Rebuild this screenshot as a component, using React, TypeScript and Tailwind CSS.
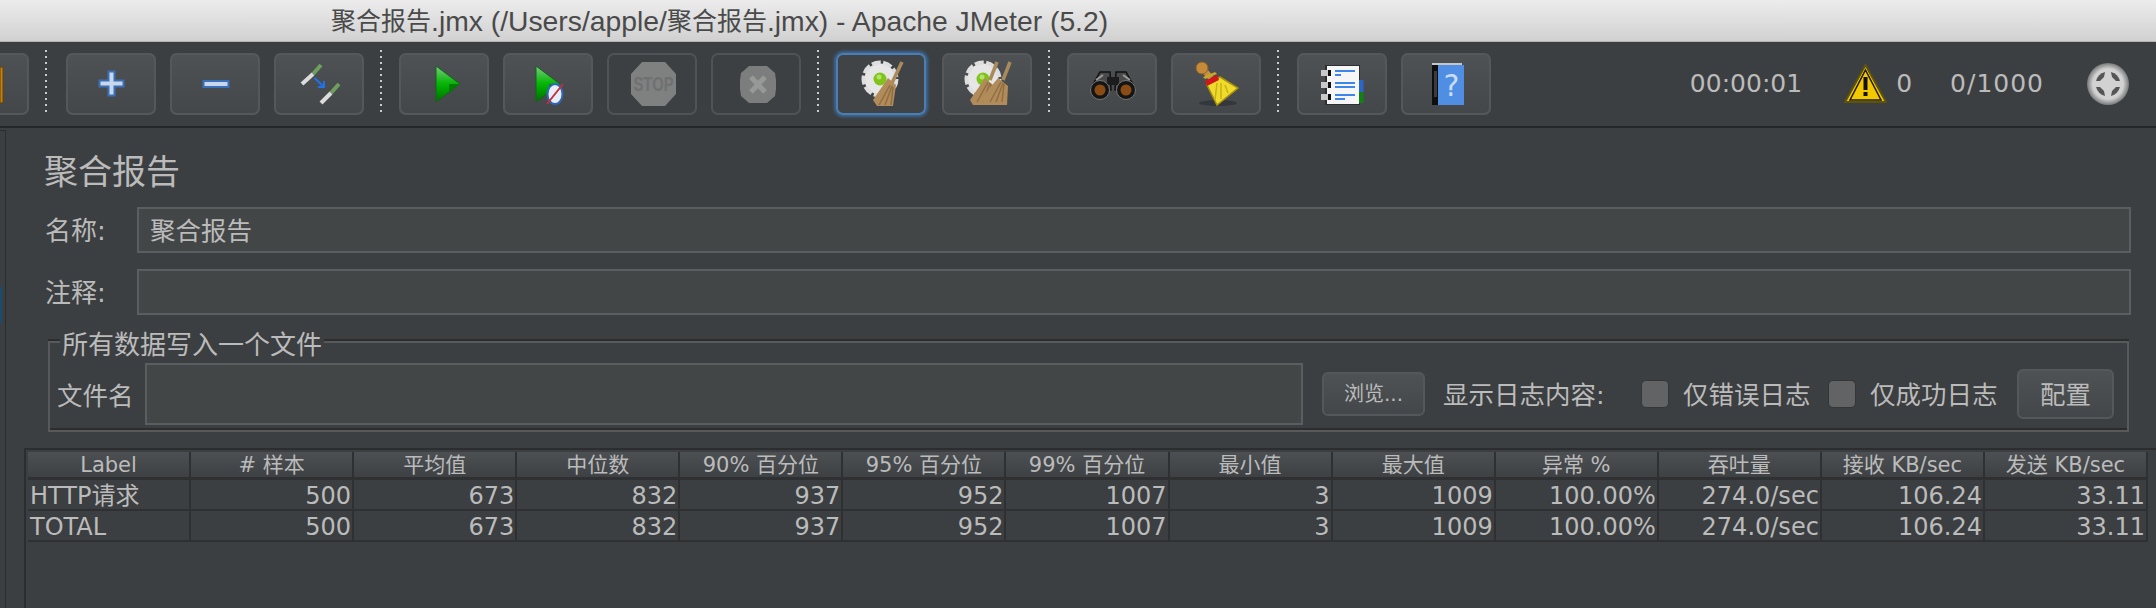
const CJK = "font-['DejaVu_Sans','Noto_Sans_CJK_SC',sans-serif]";

const columns = [
  "Label",
  "# 样本",
  "平均值",
  "中位数",
  "90% 百分位",
  "95% 百分位",
  "99% 百分位",
  "最小值",
  "最大值",
  "异常 %",
  "吞吐量",
  "接收 KB/sec",
  "发送 KB/sec",
];

const rows = [
  ["HTTP请求", "500", "673", "832", "937", "952", "1007", "3", "1009", "100.00%", "274.0/sec", "106.24", "33.11"],
  ["TOTAL", "500", "673", "832", "937", "952", "1007", "3", "1009", "100.00%", "274.0/sec", "106.24", "33.11"],
];

function Sep() {
  return (
    <div className="mx-[16px] h-[62px] w-[2px] shrink-0 -translate-y-[3px] bg-[repeating-linear-gradient(to_bottom,#c9cbcc_0,#c9cbcc_2px,transparent_2px,transparent_6px)]" />
  );
}

function ToolButton({
  children,
  disabled,
  focused,
}: {
  children?: React.ReactNode;
  disabled?: boolean;
  focused?: boolean;
}) {
  let look = "bg-gradient-to-b from-[#4e5254] to-[#434749] shadow-[inset_0_0_0_2px_#54585a]";
  if (disabled) look = "bg-[#3d4042] shadow-[inset_0_0_0_2px_#505355]";
  if (focused) look = "bg-[#404446] shadow-[inset_0_0_0_2px_#4a7eb5,0_0_3px_2px_#3d6794]";
  return <div className={`h-[62px] w-[90px] shrink-0 rounded-[7px] ${look}`}>{children}</div>;
}

function Icon({ children }: { children: React.ReactNode }) {
  return (
    <svg width="90" height="62" viewBox="0 0 90 62" className="block">
      {children}
    </svg>
  );
}

function Gear({ cx, cy }: { cx: number; cy: number }) {
  return (
    <g>
      <circle cx={cx} cy={cy} r="15.5" fill="#e6e6e6" />
      <circle cx={cx} cy={cy} r="16.5" fill="none" stroke="#dedede" strokeWidth="4" strokeDasharray="9 2.5" />
      <circle cx={cx} cy={cy} r="6.5" fill="#7fc31c" />
      <circle cx={cx - 1} cy={cy - 2} r="2.5" fill="#b5e26a" />
    </g>
  );
}

function Broom({ points, handle }: { points: string; handle: number[] }) {
  const [x1, y1, x2, y2] = handle;
  return (
    <g>
      <line x1={x1} y1={y1} x2={x2} y2={y2} stroke="#a98a5c" strokeWidth="3.5" />
      <polygon points={points} fill="#b18c5a" />
      <path
        d={`M${x2 - 2} ${y2 + 2}L${x2 - 13} ${y2 + 22}M${x2} ${y2 + 3}L${x2 - 7} ${y2 + 22}M${x2 + 1} ${y2 + 4}L${x2 - 1} ${y2 + 22}`}
        stroke="#8f6e42"
        strokeWidth="1.5"
        fill="none"
      />
    </g>
  );
}

function PlayShape({ x, id }: { x: number; id: string }) {
  return (
    <g>
      <defs>
        <linearGradient id={id} x1="0" y1="0" x2="0" y2="1">
          <stop offset="0" stopColor="#7fcb84" />
          <stop offset="0.45" stopColor="#0cb80c" />
          <stop offset="0.6" stopColor="#00a800" />
          <stop offset="1" stopColor="#006d00" />
        </linearGradient>
      </defs>
      <polygon points={`${x},13 ${x + 24},31 ${x},49`} fill={`url(#${id})`} stroke="#11651a" strokeWidth="1" />
      <polygon points={`${x + 13},31 ${x + 23},31 ${x + 13},40`} fill="#007a00" />
    </g>
  );
}

function Toolbar() {
  return (
    <div className="flex h-[84px] items-center bg-[#3c3f41]">
      <div className="ml-[-61px] flex h-[62px] items-center">
        <ToolButton>
          <Icon>
            <rect x="61" y="14" width="3" height="36" fill="#c57f10" stroke="#5f4212" strokeWidth="1" />
          </Icon>
        </ToolButton>
      </div>
      <Sep />
      <div className="ml-[3px] flex gap-[14px]">
        <ToolButton>
          <Icon>
            <path
              d="M42.5 18.5h6v9h9v6h-9v9h-6v-9h-9v-6h9z"
              fill="#c6d7ee"
              stroke="#3c70b6"
              strokeWidth="2"
            />
          </Icon>
        </ToolButton>
        <ToolButton>
          <Icon>
            <rect x="33.5" y="28" width="25" height="6" fill="#c6d7ee" stroke="#3c70b6" strokeWidth="2" />
          </Icon>
        </ToolButton>
        <ToolButton>
          <Icon>
            <line x1="47" y1="12" x2="39" y2="21" stroke="#6f9f5e" strokeWidth="4" />
            <line x1="39" y1="21" x2="28" y2="31" stroke="#dcdcdc" strokeWidth="4" />
            <line x1="65" y1="31" x2="57" y2="40" stroke="#6f9f5e" strokeWidth="4" />
            <line x1="57" y1="40" x2="47" y2="50" stroke="#dcdcdc" strokeWidth="4" />
            <path d="M40.5 25L50 34M50 28v6h-6" fill="none" stroke="#1f73e8" strokeWidth="2" />
          </Icon>
        </ToolButton>
      </div>
      <Sep />
      <div className="ml-[1px] flex gap-[14px]">
        <ToolButton>
          <Icon>
            <PlayShape x={37} id="playA" />
          </Icon>
        </ToolButton>
        <ToolButton>
          <Icon>
            <PlayShape x={33} id="playB" />
            <ellipse cx="52" cy="41" rx="7.5" ry="10" fill="#e8eef8" stroke="#2f66b8" strokeWidth="2" />
            <line x1="44" y1="51" x2="60" y2="31" stroke="#c2303c" strokeWidth="2" />
          </Icon>
        </ToolButton>
        <ToolButton disabled>
          <Icon>
            <polygon points="35,9 58,9 69,21 69,41 58,53 35,53 24,41 24,21" fill="#7f8080" />
            <text
              x="46.5"
              y="38"
              textAnchor="middle"
              fontFamily="Liberation Sans, sans-serif"
              fontWeight="700"
              fontSize="20"
              textLength="40"
              lengthAdjust="spacingAndGlyphs"
              fill="#6f7070"
            >
              STOP
            </text>
          </Icon>
        </ToolButton>
        <ToolButton disabled>
          <Icon>
            <polygon points="38,13 56,13 64,20 65,27 65,36 64,43 56,50 38,50 30,43 29,36 29,27 30,20" fill="#7c7d7d" />
            <path d="M40 24L54 39M54 24L40 39" stroke="#979898" strokeWidth="5" />
          </Icon>
        </ToolButton>
      </div>
      <Sep />
      <div className="ml-[1px] flex gap-[16px]">
        <ToolButton focused>
          <Icon>
            <Gear cx={44} cy={26} />
            <Broom points="37,47 52,25 60,32 57,53 41,53" handle={[66, 9, 56, 30]} />
          </Icon>
        </ToolButton>
        <ToolButton>
          <Icon>
            <Gear cx={41} cy={26} />
            <Broom points="28,47 43,25 51,32 48,52 31,52" handle={[55, 9, 48, 27]} />
            <Broom points="38,47 56,25 66,33 65,52 48,52" handle={[68, 9, 61, 27]} />
          </Icon>
        </ToolButton>
      </div>
      <Sep />
      <div className="ml-[1px] flex gap-[14px]">
        <ToolButton>
          <Icon>
            <polygon points="24,35 33,19 43,19 44,37" fill="#4a4a4a" stroke="#111" strokeWidth="1.5" />
            <polygon points="68,35 59,19 49,19 48,37" fill="#4a4a4a" stroke="#111" strokeWidth="1.5" />
            <rect x="40" y="24" width="12" height="8" fill="#1c1c1c" />
            <line x1="29" y1="27" x2="36" y2="22" stroke="#9a9a9a" strokeWidth="2" />
            <line x1="63" y1="27" x2="56" y2="22" stroke="#9a9a9a" strokeWidth="2" />
            <circle cx="33" cy="37" r="9.5" fill="#151515" stroke="#777" strokeWidth="1" />
            <circle cx="59" cy="37" r="9.5" fill="#151515" stroke="#777" strokeWidth="1" />
            <circle cx="33" cy="37" r="5.5" fill="#8a4c14" />
            <circle cx="59" cy="37" r="5.5" fill="#8a4c14" />
          </Icon>
        </ToolButton>
        <ToolButton>
          <Icon>
            <ellipse cx="47" cy="50" rx="19" ry="3" fill="#33363a" />
            <line x1="32" y1="16" x2="40" y2="25" stroke="#c58f48" strokeWidth="6" />
            <circle cx="31" cy="15" r="6" fill="#c58a3c" stroke="#8e6226" strokeWidth="1" />
            <polygon points="36,32 49,24 67,35 46,52" fill="#efdb2a" stroke="#a8900e" strokeWidth="1.5" />
            <path d="M46 30L44 47M50 30L50 46M54 32L57 40" stroke="#c9b11a" strokeWidth="1.5" fill="none" />
            <polygon points="34,26 32,24 44,19 46,21" fill="#c9a827" />
            <polygon points="34,28 46,22 48,27 36,33" fill="#d01818" />
          </Icon>
        </ToolButton>
      </div>
      <Sep />
      <div className="ml-[2px] flex gap-[14px]">
        <ToolButton>
          <Icon>
            <rect x="28" y="12" width="35" height="40" fill="#2d2f30" />
            <rect x="62" y="27" width="4.5" height="12" fill="#2a66c8" />
            <rect x="62" y="39" width="4.5" height="11" fill="#128012" />
            <rect x="30" y="13" width="32" height="38" fill="#f6f6f6" />
            <rect x="24" y="17" width="7" height="6" fill="#c9c9c9" />
            <rect x="31" y="17" width="3" height="6" fill="#0e0e0e" />
            <rect x="24" y="29" width="7" height="6" fill="#c9c9c9" />
            <rect x="31" y="29" width="3" height="6" fill="#0e0e0e" />
            <rect x="24" y="41" width="7" height="6" fill="#c9c9c9" />
            <rect x="31" y="41" width="3" height="6" fill="#0e0e0e" />
            <rect x="38" y="17" width="20" height="2" fill="#3f86ea" />
            <rect x="38" y="21" width="6" height="2" fill="#3f86ea" />
            <rect x="38" y="29" width="20" height="2" fill="#3f86ea" />
            <rect x="38" y="33" width="20" height="2" fill="#3f86ea" />
            <rect x="38" y="41" width="20" height="2" fill="#3f86ea" />
            <rect x="38" y="45" width="10" height="2" fill="#3f86ea" />
          </Icon>
        </ToolButton>
        <ToolButton>
          <Icon>
            <rect x="31" y="10" width="7" height="42" fill="#0f0f0f" />
            <rect x="33" y="18" width="3" height="26" fill="#3c3c3c" />
            <rect x="37" y="12" width="26" height="40" fill="#4f8ee2" />
            <rect x="31" y="10" width="30" height="2" fill="#c4c6c8" />
            <text
              x="50.5"
              y="43"
              textAnchor="middle"
              fontFamily="DejaVu Sans, sans-serif"
              fontSize="30"
              fill="#c9dcf7"
            >
              ?
            </text>
          </Icon>
        </ToolButton>
      </div>
      <div className="ml-auto flex items-center pr-[27px] text-[25px] text-[#bbbbbb] font-['DejaVu_Sans',sans-serif]">
        <span>00:00:01</span>
        <svg width="43" height="40" viewBox="0 0 43 40" className="ml-[42px] mr-[9px] shrink-0">
          <polygon points="21.5,1 42,38 1,38" fill="#f2c800" stroke="#5d5210" strokeWidth="2" />
          <polygon points="21.5,6 37,36 6,36" fill="none" stroke="#1d1a05" strokeWidth="1.5" />
          <rect x="19.5" y="13" width="4" height="13" fill="#111" />
          <rect x="19.5" y="28" width="4" height="4" fill="#111" />
        </svg>
        <span>0</span>
        <span className="ml-[38px] tracking-[1px]">0/1000</span>
        <svg width="42" height="42" viewBox="0 0 42 42" className="ml-[43px] shrink-0">
          <defs>
            <radialGradient id="ballGlow" cx="0.5" cy="0.5" r="0.5">
              <stop offset="0.72" stopColor="#d2d2d2" />
              <stop offset="1" stopColor="#77797a" />
            </radialGradient>
          </defs>
          <circle cx="21" cy="21" r="21" fill="url(#ballGlow)" />
          <path d="M9 18a13 13 0 0 1 9-9l-1 5-4 4z" fill="#555" />
          <path d="M33 18a13 13 0 0 0-9-9l1 5 4 4z" fill="#555" />
          <path d="M9 24a13 13 0 0 0 9 9l-1-5-4-4z" fill="#555" />
          <path d="M33 24a13 13 0 0 1-9 9l1-5 4-4z" fill="#555" />
        </svg>
      </div>
    </div>
  );
}

function TextBox({ value, className }: { value?: string; className?: string }) {
  return (
    <div
      className={`flex items-center border-2 border-[#5b5e60] bg-[#434647] pl-[11px] pt-[2px] text-[25.5px] text-[#bbbbbb] ${className ?? ""}`}
    >
      {value}
    </div>
  );
}

function CheckItem({ label }: { label: string }) {
  return (
    <div className="flex items-center gap-[14px]">
      <div className="h-[28px] w-[28px] rounded-[5px] border border-[#34373a] bg-[#616364]" />
      <span className="w-[128px] whitespace-nowrap pt-[2px]">{label}</span>
    </div>
  );
}

function FileBox() {
  return (
    <div className="relative mb-[16px] ml-[42px] mr-[27px] mt-[26px] h-[91px] border-2 border-[#57595b] shadow-[0_-2px_0_#2b2d2e,inset_0_-2px_0_#2b2d2e]">
      <span className="absolute left-[10px] top-[-15px] bg-[#3c3f41] px-[2px] text-[26px] leading-[34px] text-[#bbbbbb]">
        所有数据写入一个文件
      </span>
      <div className="mt-[20px] flex h-[62px] items-center pl-[7px] pr-[12px] text-[25.5px] text-[#bbbbbb]">
        <span className="w-[76px] whitespace-nowrap pt-[4px]">文件名</span>
        <TextBox className="ml-[12px] h-[62px] w-[1158px]" />
        <button className="ml-[19px] h-[44px] w-[103px] rounded-[6px] border-2 border-[#54585a] bg-gradient-to-b from-[#4e5254] to-[#434749] text-[20px] text-[#bbbbbb]">
          浏览...
        </button>
        <span className="ml-[18px] w-[198px] whitespace-nowrap pt-[2px]">显示日志内容:</span>
        <CheckItem label="仅错误日志" />
        <div className="w-[17px]" />
        <CheckItem label="仅成功日志" />
        <button className="ml-[19px] h-[50px] w-[97px] rounded-[6px] border-2 border-[#54585a] bg-gradient-to-b from-[#4e5254] to-[#434749] pt-[2px] text-[25.5px] text-[#bbbbbb]">
          配置
        </button>
      </div>
    </div>
  );
}

function ResultTable() {
  return (
    <div className="ml-[18px] flex-1 border-l-2 border-t-2 border-[#2b2d2e] pl-[2px] pr-[8px] pt-[2px]">
      <div className="grid grid-cols-[repeat(13,minmax(0,1fr))] border-b-[3px] border-[#2e3032]">
        {columns.map((c) => (
          <div
            key={c}
            className="flex h-[25px] items-center justify-center whitespace-nowrap border-r-2 border-[#2e3032] bg-gradient-to-b from-[#4c5052] to-[#3e4144] pt-[2px] text-[21px] leading-[23px] text-[#bbbbbb]"
          >
            {c}
          </div>
        ))}
      </div>
      {rows.map((row) => (
        <div
          key={row[0]}
          className="grid h-[31px] grid-cols-[repeat(13,minmax(0,1fr))] border-b-2 border-[#2e3032] text-[24px] leading-[26px] text-[#bbbbbb]"
        >
          {row.map((v, i) => (
            <div
              key={i}
              className={`flex h-[29px] items-center whitespace-nowrap border-r-2 border-[#2e3032] pt-[3px] ${
                i === 0 ? "pl-[2px]" : "justify-end pr-[1px]"
              }`}
            >
              {v}
            </div>
          ))}
        </div>
      ))}
    </div>
  );
}

export default function App() {
  return (
    <div className={`flex h-[608px] w-[2156px] flex-col overflow-hidden bg-[#3c3f41] ${CJK}`}>
      <div className="flex h-[42px] shrink-0 items-center whitespace-pre border-b border-[#b4b4b4] bg-gradient-to-b from-[#ececec] to-[#d1d1d1] pl-[331px] text-[28.3px] leading-[40px] text-[#4a4a4a] font-['Liberation_Sans','Noto_Sans_CJK_SC',sans-serif]">
        <span className="text-[25px]">聚合报告</span>
        <span>.jmx (/Users/apple/</span>
        <span className="text-[25px]">聚合报告</span>
        <span>.jmx) - Apache JMeter (5.2)</span>
      </div>
      <Toolbar />
      <div className="h-[2px] shrink-0 bg-[#242628]" />
      <div className="flex flex-1">
        <div className="relative mt-[2px] w-[6px] shrink-0 border-r border-t border-[#2b2d2e]">
          <div className="absolute left-0 top-[156px] h-[36px] w-[2px] bg-[#1c4a6b]" />
        </div>
        <div className="flex min-w-0 flex-1 flex-col">
          <div className="ml-[38px] mt-[22px] h-[44px] text-[34px] leading-[44px] text-[#bbbbbb]">聚合报告</div>
          <div className="mt-[13px] flex h-[46px] items-center pl-[39px] pr-[25px] text-[26px] text-[#bbbbbb]">
            <span className="w-[92px] whitespace-nowrap pt-[2px]">名称:</span>
            <TextBox value="聚合报告" className="h-[46px] flex-1" />
          </div>
          <div className="mt-[16px] flex h-[46px] items-center pl-[39px] pr-[25px] text-[26px] text-[#bbbbbb]">
            <span className="w-[92px] whitespace-nowrap pt-[2px]">注释:</span>
            <TextBox className="h-[46px] flex-1" />
          </div>
          <FileBox />
          <ResultTable />
        </div>
      </div>
    </div>
  );
}
